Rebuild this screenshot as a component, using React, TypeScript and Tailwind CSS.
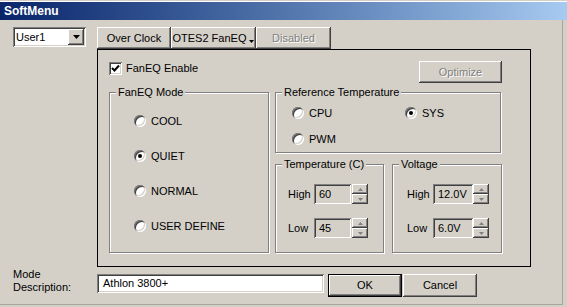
import React from "react";

const raised =
  "shadow-[inset_-1px_-1px_0_#404040,inset_1px_1px_0_#ffffff,inset_-2px_-2px_0_#808080,inset_2px_2px_0_#d4d0c8]";
const sunken =
  "shadow-[inset_1px_1px_0_#808080,inset_-1px_-1px_0_#ffffff,inset_2px_2px_0_#404040,inset_-2px_-2px_0_#d4d0c8]";
const etched = "border border-[#808080] shadow-[inset_1px_1px_0_#ffffff,1px_1px_0_#ffffff]";
const disabledText = "text-[#808080] [text-shadow:1px_1px_0_#ffffff]";

function GroupBox({ label, className, children }: { label: string; className: string; children?: React.ReactNode }) {
  return (
    <div className={`relative ${etched} ${className}`}>
      <span className="absolute -top-[7px] left-[6px] px-[2px] bg-[#d4d0c8] leading-[13px]">{label}</span>
      {children}
    </div>
  );
}

function Radio({ label, checked }: { label: string; checked?: boolean }) {
  return (
    <div className="flex items-center gap-[5px] h-[12px]">
      <div className={`w-[12px] h-[12px] rounded-full bg-white flex items-center justify-center ${sunken}`}>
        {checked && <div className="w-[4px] h-[4px] rounded-full bg-black" />}
      </div>
      <span className="leading-[13px]">{label}</span>
    </div>
  );
}

function Arrow({ up, color = "#000", w = 7, h = 4 }: { up?: boolean; color?: string; w?: number; h?: number }) {
  return (
    <svg width={w} height={h} viewBox={`0 0 ${w} ${h}`}>
      <polygon points={up ? `0,${h} ${w},${h} ${w / 2},0` : `0,0 ${w},0 ${w / 2},${h}`} fill={color} />
    </svg>
  );
}

function Spinner() {
  return (
    <div className="flex flex-col w-[16px] h-[20px]">
      <div className={`h-[10px] flex items-center justify-center bg-[#d4d0c8] ${raised}`}>
        <Arrow up color="#808080" w={5} h={3} />
      </div>
      <div className={`h-[10px] flex items-center justify-center bg-[#d4d0c8] ${raised}`}>
        <Arrow color="#808080" w={5} h={3} />
      </div>
    </div>
  );
}

function SpinRow({ label, value, inputW, gapL }: { label: string; value: string; inputW: string; gapL: string }) {
  return (
    <div className="flex items-center h-[20px]">
      <span className="w-[26px] leading-[13px]">{label}</span>
      <div className={`${inputW} h-[20px] bg-[#d4d0c8] pl-[5px] flex items-center ${sunken}`}>{value}</div>
      <div className={gapL}>
        <Spinner />
      </div>
    </div>
  );
}

export default function App() {
  return (
    <div className="w-[567px] h-[307px] bg-[#d4d0c8] font-['Liberation_Sans',Arial,sans-serif] text-[11px] text-black overflow-hidden">
      <div className="h-[2px] bg-[#d4d0c8] border-b border-white" />
      {/* Title bar */}
      <div className="h-[18px] bg-gradient-to-r from-[#0a246a] to-[#a6caf0] flex items-center pl-[4px]">
        <span className="text-white font-bold text-[12px] leading-none">SoftMenu</span>
      </div>

      <div className="h-[285px] border-b border-r border-[#a8a59e] w-[563px]">
        {/* Top section */}
        <div className="flex pt-[7px]">
          <div className="w-[97px] pl-[13px]">
            <div className={`w-[73px] h-[20px] bg-white flex items-center justify-between pl-[3px] pr-[2px] ${sunken}`}>
              <span>User1</span>
              <div className={`w-[16px] h-[16px] bg-[#d4d0c8] flex items-center justify-center ${raised}`}>
                <Arrow />
              </div>
            </div>
          </div>

          <div className="flex flex-col">
            {/* Tabs */}
            <div className="flex h-[22px]">
              <div className={`w-[74px] flex items-center justify-center ${raised}`}>Over Clock</div>
              <div className={`w-[85px] flex items-center justify-center gap-[3px] ${raised}`}>
                <span>OTES2 FanEQ</span>
                <span className="mt-[7px]">
                  <Arrow w={5} h={3} />
                </span>
              </div>
              <div className={`w-[75px] flex items-center justify-center ${raised} ${disabledText}`}>Disabled</div>
            </div>

            {/* Panel */}
            <div className="w-[434px] h-[218px] border border-black pt-[11px] pl-[11px]">
              <div className="flex w-[393px] justify-between items-start h-[22px]">
                <div className="flex items-center gap-[4px] mt-[1px]">
                  <div className={`w-[13px] h-[13px] bg-white flex items-center justify-center ${sunken}`}>
                    <svg width="9" height="9" viewBox="0 0 9 9">
                      <path d="M1 4 L3.5 6.5 L8 1.5" stroke="#000" strokeWidth="2" fill="none" />
                    </svg>
                  </div>
                  <span className="leading-[13px]">FanEQ Enable</span>
                </div>
                <div className={`w-[83px] h-[22px] flex items-center justify-center ${raised} ${disabledText}`}>
                  Optimize
                </div>
              </div>

              <div className="flex gap-[6px] mt-[9px]">
                <GroupBox label="FanEQ Mode" className="w-[160px] h-[161px] pl-[24px] pt-[22px]">
                  <div className="flex flex-col gap-[23px]">
                    <Radio label="COOL" />
                    <Radio label="QUIET" checked />
                    <Radio label="NORMAL" />
                    <Radio label="USER DEFINE" />
                  </div>
                </GroupBox>

                <div className="w-[227px] flex flex-col">
                  <GroupBox label="Reference Temperature" className="w-[226px] h-[61px] pl-[16px] pt-[14px]">
                    <div className="grid grid-cols-[113px_auto] gap-y-[14px]">
                      <Radio label="CPU" />
                      <Radio label="SYS" checked />
                      <Radio label="PWM" />
                    </div>
                  </GroupBox>

                  <div className="flex gap-[8px] mt-[11px]">
                    <GroupBox label="Temperature (C)" className="w-[109px] h-[89px] pl-[12px] pt-[19px]">
                      <div className="flex flex-col gap-[14px]">
                        <SpinRow label="High" value="60" inputW="w-[37px]" gapL="ml-[1px]" />
                        <SpinRow label="Low" value="45" inputW="w-[37px]" gapL="ml-[1px]" />
                      </div>
                    </GroupBox>
                    <GroupBox label="Voltage" className="w-[110px] h-[89px] pl-[14px] pt-[19px]">
                      <div className="flex flex-col gap-[14px]">
                        <SpinRow label="High" value="12.0V" inputW="w-[40px]" gapL="ml-0" />
                        <SpinRow label="Low" value="6.0V" inputW="w-[40px]" gapL="ml-0" />
                      </div>
                    </GroupBox>
                  </div>
                </div>
              </div>
            </div>
          </div>
        </div>

        {/* Bottom row */}
        <div className="flex items-start">
          <div className="w-[97px] pl-[13px] mt-[1px] leading-[13px]">
            <div>Mode</div>
            <div>Description:</div>
          </div>
          <div className={`w-[227px] h-[19px] mt-[7px] bg-white flex items-center pl-[6px] ${sunken}`}>Athlon 3800+</div>
          <div className="ml-[4px] mt-[7px] w-[74px] h-[23px] border border-black">
            <div className={`w-full h-full flex items-center justify-center ${raised}`}>OK</div>
          </div>
          <div className={`ml-[1px] mt-[7px] w-[74px] h-[23px] flex items-center justify-center ${raised}`}>Cancel</div>
        </div>
      </div>
    </div>
  );
}
